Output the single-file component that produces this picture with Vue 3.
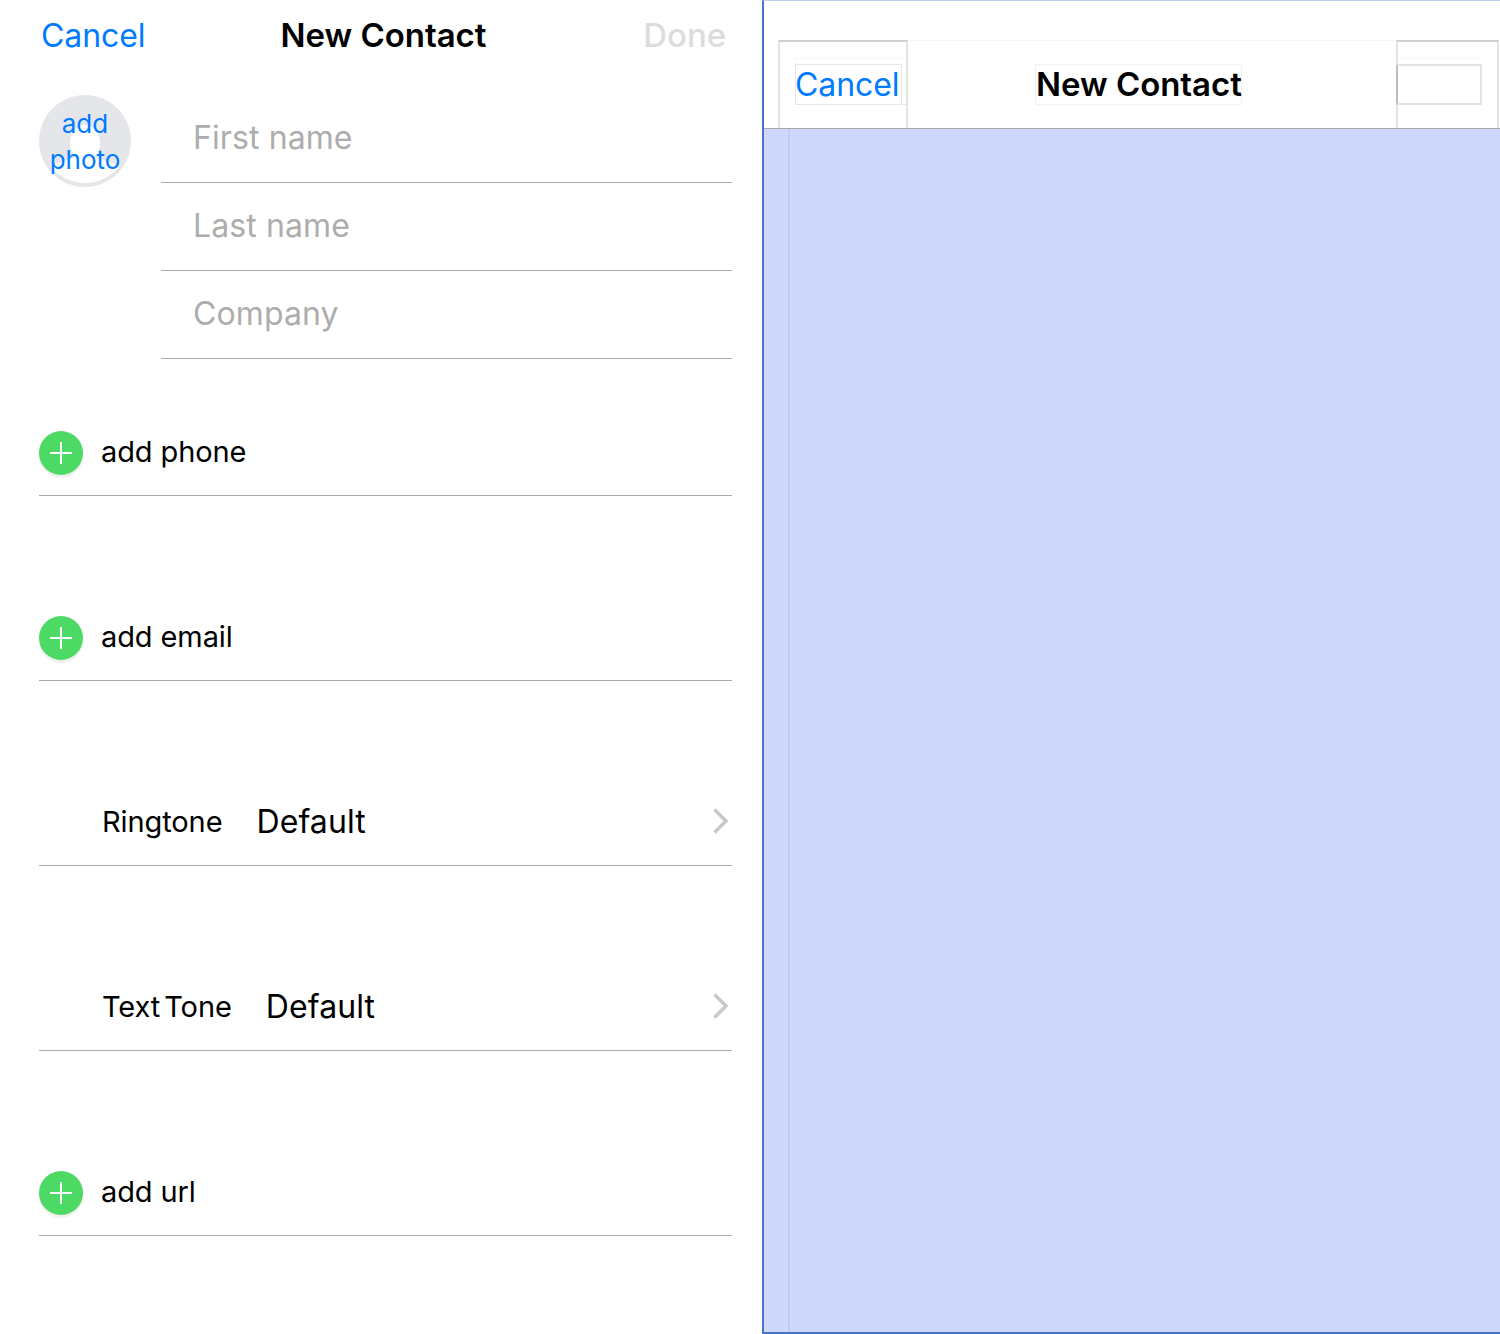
<script setup>
const fields = ["First name", "Last name", "Company"];
const rows = [
	{ id: 1, type: "add", label: "add phone" },
	{ id: 2, type: "add", label: "add email" },
	{ id: 3, type: "link", label: "Ringtone", value: "Default" },
	{ id: 4, type: "link", label: "Text Tone", value: "Default" },
	{ id: 5, type: "add", label: "add url" },
];
</script>
<template>
	<div class="page">
		<section class="form">
			<header class="nav">
				<span class="cancel">Cancel</span>
				<span class="title">New Contact</span>
				<span class="done">Done</span>
			</header>
			<div class="head">
				<div class="avatar">
					<svg class="avatar-bg" width="92" height="92" viewBox="0 0 92 92">
						<circle cx="46" cy="46" r="46" fill="#e4e6ea" />
						<ellipse cx="46" cy="48" rx="15" ry="18" fill="#fff" />
						<path d="M12 72C18 66 32 66 38 60L54 60C60 66 74 66 80 72A44 44 0 0 1 12 72Z" fill="#fff" />
					</svg>
					<span class="avatar-text">add<br />photo</span>
				</div>
				<div class="fields">
					<div class="field" v-for="field in fields" :key="field">{{ field }}</div>
				</div>
			</div>
			<div class="rows">
				<div class="row" :class="'row-' + row.type" v-for="row in rows" :key="row.id">
					<span class="plus" v-if="row.type === 'add'">
						<svg width="22" height="22" viewBox="0 0 22 22">
							<path d="M0 11H22M11 0V22" stroke="#fff" stroke-width="2" fill="none" />
						</svg>
					</span>
					<span class="row-label">{{ row.label }}</span>
					<span class="row-value" v-if="row.value">{{ row.value }}</span>
					<svg v-if="row.type === 'link'" class="chevron" width="18" height="28" viewBox="0 0 18 28">
						<path d="M2.5 2.5L14 14L2.5 25.5" stroke="#c7c7cc" stroke-width="3.4" fill="none" />
					</svg>
				</div>
			</div>
		</section>
		<section class="inspect">
			<div class="bar">
				<div class="bar-inner">
					<div class="slot slot-left">
						<div class="wrap">
							<div class="box box-cancel">Cancel</div>
						</div>
					</div>
					<div class="box box-title">New Contact</div>
					<div class="slot slot-right">
						<div class="wrap wrap-right">
							<div class="box box-empty"></div>
						</div>
					</div>
				</div>
			</div>
			<div class="content">
				<div class="strip"></div>
			</div>
		</section>
	</div>
</template>
<style>
	html,
	body {
		margin: 0;
		background: #fff;
	}
</style>
<style scoped>
	.page {
		display: flex;
		width: 1500px;
		height: 1334px;
		overflow: hidden;
		font-family: Inter, "Liberation Sans", sans-serif;
		color: #000;
	}

	.form {
		width: 762px;
		flex: none;
		box-sizing: border-box;
		padding: 0 30px 0 39px;
	}

	.nav {
		height: 71px;
		display: grid;
		grid-template-columns: 1fr auto 1fr;
		align-items: center;
		padding: 0 6px 0 2px;
		font-size: 32px;
		letter-spacing: -0.07px;
	}
	.cancel {
		color: #007aff;
	}
	.title {
		font-size: 33px;
		font-weight: 600;
		letter-spacing: -0.05px;
		color: #000;
		margin-top: -2px;
	}
	.done {
		justify-self: end;
		font-size: 33px;
		color: #dcdcdc;
		font-weight: 500;
		margin-top: -2px;
	}

	.head {
		display: flex;
		gap: 30px;
		margin-top: 24px;
	}
	.avatar {
		position: relative;
		width: 92px;
		height: 92px;
		flex: none;
	}
	.avatar-bg {
		display: block;
	}
	.avatar-text {
		position: absolute;
		inset: 11px 0 0;
		text-align: center;
		font-size: 26px;
		line-height: 36px;
		color: #007aff;
	}
	.fields {
		flex: 1;
	}
	.field {
		height: 88px;
		box-sizing: border-box;
		border-bottom: 1px solid #ababab;
		padding: 24px 0 0 32px;
		font-size: 32px;
		line-height: 38px;
		letter-spacing: 0.1px;
		color: #adadad;
	}

	.rows {
		margin-top: 49px;
	}
	.row {
		height: 88px;
		box-sizing: border-box;
		border-bottom: 1px solid #ababab;
		display: flex;
		align-items: center;
		padding: 23px 3px 20px 0;
		margin-bottom: 97px;
		font-size: 29px;
		letter-spacing: -0.1px;
	}
	.plus {
		width: 44px;
		height: 44px;
		border-radius: 50%;
		background: #4cd964;
		box-shadow: 0 3px 1px #f0f0f0;
		display: flex;
		align-items: center;
		justify-content: center;
		flex: none;
		margin-right: 18px;
	}
	.plus svg {
		display: block;
	}
	.row-label {
		line-height: 44px;
		margin-top: -2px;
	}
	.row-link .row-label {
		margin-left: 63px;
		word-spacing: -4px;
	}
	.row-value {
		margin-left: 34px;
		margin-top: -4px;
		font-size: 32px;
		letter-spacing: 0.1px;
	}
	.chevron {
		margin-left: auto;
		margin-right: -1px;
		margin-top: -4px;
	}

	.inspect {
		flex: 1;
		display: flex;
		flex-direction: column;
		box-sizing: border-box;
		border-left: 2px solid #4a72c6;
		border-top: 1px solid #bccdee;
		border-bottom: 2px solid #4a72c6;
		background: #d0d7fd;
	}
	.bar {
		height: 128px;
		flex: none;
		box-sizing: border-box;
		background: #fff;
		border-bottom: 1px solid #a9a9a9;
		padding-top: 39px;
	}
	.bar-inner {
		height: 88px;
		box-sizing: border-box;
		border-top: 1px solid #f6f6f6;
		margin-left: 14px;
		margin-right: 1px;
		display: flex;
		justify-content: space-between;
		align-items: flex-start;
	}
	.slot {
		height: 88px;
		margin-top: -1px;
		box-sizing: border-box;
		border: 2px solid #e3e3e3;
		border-top-color: #cfcfcf;
		border-bottom: none;
		padding-top: 16px;
	}
	.slot-left {
		width: 130px;
		padding-left: 15px;
	}
	.slot-right {
		width: 103px;
	}
	.wrap {
		box-sizing: border-box;
		height: 47px;
		padding-top: 5px;
		border-top: 1px solid #f7f7f7;
		border-left: 1px solid #f7f7f7;
		border-bottom: 1px solid #e9e9e9;
	}
	.wrap-right {
		width: 86px;
		margin-left: -2px;
		border-left: none;
		border-bottom: none;
	}
	.box {
		height: 41px;
		box-sizing: border-box;
		border: 1px solid #f2f2f2;
		line-height: 39px;
		white-space: nowrap;
		font-size: 32px;
		letter-spacing: -0.07px;
	}
	.box-cancel {
		width: 107px;
		margin-left: -1px;
		margin-bottom: -1px;
		border-color: #e6e6e6;
		color: #007aff;
		text-indent: -1px;
	}
	.box-title {
		width: 207px;
		margin-top: 23px;
		margin-right: 27px;
		font-size: 33px;
		font-weight: 600;
		letter-spacing: -0.05px;
		text-align: center;
	}
	.box-empty {
		width: 86px;
		border: 2px solid #e3e3e3;
		border-left-color: #bdbdbd;
	}
	.content {
		flex: 1;
		padding-left: 24px;
		display: flex;
	}
	.strip {
		width: 2px;
		background: #c3cbec;
	}
</style>
